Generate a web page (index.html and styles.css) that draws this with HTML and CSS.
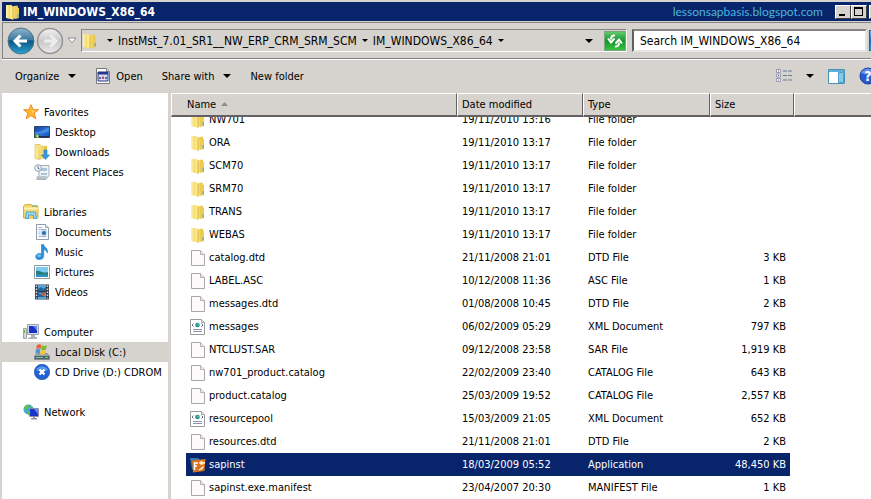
FILE: index.html
```html
<!DOCTYPE html>
<html lang="en">
<head>
    <meta charset="UTF-8">
    <meta name="viewport" content="width=device-width, initial-scale=1.0">
    <title>IM_WINDOWS_X86_64</title>
    <link rel="stylesheet" href="styles.css">
</head>
<body>
    <!-- Shared icons -->
    <svg class="icon-defs" width="0" height="0" aria-hidden="true">
        <defs>
            <linearGradient id="gold" x1="0" x2="1"><stop offset="0" stop-color="#fbe98a"/><stop offset="1" stop-color="#e6bd3c"/></linearGradient>
            <linearGradient id="gold-light" x1="0" x2="1"><stop offset="0" stop-color="#fff3ae"/><stop offset="1" stop-color="#eccb55"/></linearGradient>
            <linearGradient id="screen" x1="0" y1="0" x2="1" y2="1"><stop offset="0" stop-color="#1a3f96"/><stop offset="0.6" stop-color="#2b74d8"/><stop offset="1" stop-color="#154aa8"/></linearGradient>
            <linearGradient id="back" x1="0" y1="0" x2="0" y2="1"><stop offset="0" stop-color="#8fb4cc"/><stop offset="0.45" stop-color="#3b7ba4"/><stop offset="0.5" stop-color="#0d5583"/><stop offset="1" stop-color="#27a5d4"/></linearGradient>
            <linearGradient id="forward" x1="0" y1="0" x2="0" y2="1"><stop offset="0" stop-color="#f2f2f2"/><stop offset="0.5" stop-color="#c9c9c9"/><stop offset="1" stop-color="#e9e9e9"/></linearGradient>
        </defs>
        <symbol id="folder" viewBox="0 0 16 16">
            <path d="M1 1h5l1 1v12l-2 1-4-1z" fill="url(#gold-light)"/>
            <path d="M7 2.500l5-1 1 1v11l-5 1.500H7z" fill="url(#gold)"/>
            <path d="M5 .5l3 2V16l-3-1.500z" fill="#fbe985"/>
            <path d="M8 2.500V16" stroke="#d1a52f" stroke-width=".7"/>
            <path d="M10 3.500l4 .5v10l-4 1z" fill="#eecb52"/>
            <path d="M12.500 10h1.500v3.500h-1.500z" fill="#6bb3bd"/>
        </symbol>
        <symbol id="file" viewBox="0 0 16 16">
            <path d="M1.500.5h9l4 4v11h-13z" fill="#fcfafb" stroke="#aaa5a8"/>
            <path d="M10.500.5v4h4" fill="#eeebed" stroke="#b5b0b3"/>
        </symbol>
        <symbol id="xml" viewBox="0 0 16 16">
            <path d="M.5.5h11l3 3v12H.5z" fill="#fff" stroke="#9b9b9b"/>
            <path d="M11.500.5v3h3" fill="#e4e4e4" stroke="#aaa"/>
            <path d="M3.500 4.500L2 6l1.500 1.500M11.500 4.500L13 6l-1.500 1.500" fill="none" stroke="#667086"/>
            <circle cx="7.500" cy="6" r="2.300" fill="#27967e"/><circle cx="8" cy="5.500" r="1" fill="#58b9df"/>
            <path d="M3 10.500h9M3 12.500h9" stroke="#8894b2"/>
        </symbol>
        <symbol id="app" viewBox="0 0 16 16">
            <path d="M0 1h8l2 2v9H2z" fill="#3b78ae"/>
            <path d="M2 3.500L15.500 2 14.500 14 3 15.500z" fill="#d9741a"/>
            <path d="M4.500 13V6H8M4.500 9H7" fill="none" stroke="#fff" stroke-width="1.500"/>
            <path d="M9 6l3-2v1.300h2.500v1.500H12V8zM13.500 9c-.5 3-2.500 4-5 4" fill="#fff" stroke="#ffe0b8" stroke-width=".8"/>
        </symbol>
        <symbol id="star" viewBox="0 0 16 16">
            <path d="M8 .7l2.100 5h5.300l-4.200 3.500 1.600 5.600L8 11.600l-4.800 3.200 1.600-5.600L.6 5.700h5.300z" fill="#ffb52e" stroke="#ef8b24"/>
            <path d="M8 2.800l1.400 4h3.200L9.500 9z" fill="#ffdf70"/>
        </symbol>
        <symbol id="desktop" viewBox="0 0 16 16">
            <path d="M.5 2.500h15v11H.5z" fill="url(#screen)" stroke="#274577"/>
            <path d="M1 8c5 0 8-2 14-5v4c-5 2-8 3-14 3z" fill="#4e99ed" opacity=".7"/>
            <path d="M1 12h14v1.500H1z" fill="#1c3056"/><circle cx="3" cy="12" r="1.800" fill="#80bc42"/><path d="M3 10.300v3.400h1.800z" fill="#f6d74b"/>
        </symbol>
        <symbol id="downloads" viewBox="0 0 16 16">
            <path d="M1 .5h5l1 1v13l-2 1-4-1z" fill="url(#gold-light)" stroke="#d8b956" stroke-width=".7"/>
            <path d="M5 1.500l8 .5v12l-6 1z" fill="url(#gold)"/>
            <path d="M10 6h3v5h2.500l-4 4.500-4-4.500H10z" fill="#389ae5" stroke="#2276c0" stroke-width=".6"/>
        </symbol>
        <symbol id="recent" viewBox="0 0 16 16">
            <path d="M5 1.500h10v10l-3 4H3l2-4z" fill="#edf2f5" stroke="#a3afb8"/>
            <path d="M7 4h6v3H7zM7 9h6v2H7z" fill="#a9c4d6"/><path d="M3 12h10l-1 3H2z" fill="#b8c4cc"/>
            <circle cx="4" cy="4" r="3.300" fill="#f8fcff" stroke="#8ca0b3"/><path d="M4 2v2.300l1.500.7" fill="none" stroke="#45658b"/>
        </symbol>
        <symbol id="libraries" viewBox="0 0 16 16">
            <path d="M.5 2l2-1.500h6L10 2h5v12H.5z" fill="#f2d66e" stroke="#d8ae3d"/>
            <path d="M1 4.500h14" stroke="#fff4b5" stroke-width="2"/><path d="M9 2h5" stroke="#67ae8c"/>
            <path d="M2.500 14.500l1-6.500h9l1 6.500h-3V11h-5v3.500z" fill="#9ed8f3" stroke="#4aa3d0"/>
        </symbol>
        <symbol id="documents" viewBox="0 0 16 16">
            <path d="M2.500.5h9l3 3v12h-12z" fill="#fafcff" stroke="#8f9cab"/>
            <path d="M11.500.5v3h3" fill="#dce6ee" stroke="#a0aab4"/>
            <path d="M4.500 3.500h4M4.500 5.500h8M4.500 8h2M4.500 10h2M4.500 12.500h8" stroke="#a3b5ca"/>
            <path d="M7.500 6.500h5v5h-5z" fill="#8bb9e6"/><circle cx="10" cy="9" r="1.800" fill="#1e69a9"/>
        </symbol>
        <symbol id="music" viewBox="0 0 16 16">
            <path d="M7.500.5h2c.3 2.500 4.500 3 4 8.500-1-2.500-2.300-3.300-3.800-3.500V12c0 4.500-8 4.800-8 .7 0-2.700 3.400-4 5.800-2.700z" fill="#2b91dc" stroke="#1e75bb" stroke-width=".6"/>
            <ellipse cx="5" cy="11.700" rx="2" ry="1.200" fill="#79c3f2"/>
        </symbol>
        <symbol id="pictures" viewBox="0 0 16 16">
            <path d="M.5 1.500h15v13H.5z" fill="#fff" stroke="#8e9aa3"/>
            <path d="M2 3h12v10H2z" fill="#80cbed"/><path d="M2 7c4-1 6 3 12 1v3H2z" fill="#267c7a"/><path d="M2 10.500h12V13H2z" fill="#2a91c4"/>
        </symbol>
        <symbol id="videos" viewBox="0 0 16 16">
            <path d="M1 .5h14v15H1z" fill="#333c48"/>
            <path d="M4 1h8v6H4zM4 8.500h8V15H4z" fill="#57a5d9"/>
            <path d="M4 5l3-2 2 2 3-2v4H4zM4 9l8 4H4z" fill="#27649a"/><path d="M7 9h4v2.500H8z" fill="#c95947"/>
            <path d="M2.500 1.500v13M13.500 1.500v13" stroke="#dbe4eb" stroke-width="1.400" stroke-dasharray="1.500 1.500"/>
        </symbol>
        <symbol id="computer" viewBox="0 0 16 16">
            <path d="M.5 4.500h3v10h-3z" fill="#d4d7d8" stroke="#a1a4a6"/><path d="M1.500 6v3" stroke="#58b954"/>
            <path d="M4.500.5h11v10h-11z" fill="#d7dae0" stroke="#9da3ae"/><path d="M6 2h8v7H6z" fill="#1832c5"/><path d="M10 2h4v5z" fill="#5f87ef"/>
            <path d="M8 11h4v2h2v2H5v-1l3-1z" fill="#adb1b8"/>
        </symbol>
        <symbol id="disk" viewBox="0 0 16 16">
            <path d="M3 9.500h10l2.500 2.500v3.500H.5V12z" fill="#9ca4aa" stroke="#6b757b" stroke-width=".7"/><path d="M1 12h14v3H1z" fill="#4e656e"/><path d="M2 13.500h7" stroke="#77c29f"/><path d="M11 13.500h3" stroke="#52db63"/>
            <path d="M3 1c2-1 3-1 4.500 0L6.500 5C5 4 4 4 2 5z" fill="#e96136"/><path d="M8 1.300c2 1 3 1 5 0L12 5.500c-2 1-3 .8-5-.2z" fill="#80b837"/>
            <path d="M2 5.500c2-1 3-1 4.500 0l-1 4c-2-1-3-1-4.500 0z" fill="#429ad9"/><path d="M7 5.700c2 1 3 1 5 0L11 10c-2 1-3 1-5 0z" fill="#f4c43a"/>
        </symbol>
        <symbol id="cd" viewBox="0 0 16 16">
            <circle cx="8" cy="8" r="7.700" fill="#2262d2" stroke="#1949a1" stroke-width=".6"/><path d="M2 6c2-5 10-5 12 0-4 2-8 2-12 0z" fill="#5794eb"/>
            <path d="M5.500 5.500l5 5M10.500 5.500l-5 5" stroke="#fff" stroke-width="2.200"/>
        </symbol>
        <symbol id="network" viewBox="0 0 16 16">
            <circle cx="5.500" cy="5.500" r="5" fill="#3fa8dc"/><path d="M2 2c3-2 4-1 4 1L3 6 1 5zM5 7l3 1-2 3-2-1zM7 1l3 2-2 1z" fill="#65bf45"/>
            <path d="M6.500 4.500h9v8h-9z" fill="#c8d1df" stroke="#8790a0"/><path d="M7 5h8v7H7z" fill="#1b35cb"/><path d="M11 5h4v5z" fill="#668bed"/><path d="M10 13h2v1h2v1.500H8V14h2z" fill="#8e949f"/>
        </symbol>
        <symbol id="down" viewBox="0 0 8 4"><path d="M0 0h8L4 4z" fill="currentColor"/></symbol>
    </svg>

    <div class="window">
        <header class="title-bar">
            <svg class="icon"><use href="#folder"/></svg>
            <h1 class="title">IM_WINDOWS_X86_64</h1>
            <span class="watermark">lessonsapbasis.blogspot.com</span>
            <div class="window-buttons">
                <button class="window-btn" aria-label="Minimize"><svg width="12" height="10"><path d="M2 7h6v2H2z"/></svg></button>
                <button class="window-btn" aria-label="Maximize"><svg width="12" height="10"><path d="M1 0h9v9H1zM2 2v6h7V2z" fill-rule="evenodd"/></svg></button>
                <button class="window-btn window-close" aria-label="Close"><svg width="12" height="10"><path d="M2 1l7 7M9 1L2 8" stroke="#000" stroke-width="2"/></svg></button>
            </div>
        </header>

        <!-- Address bar -->
        <nav class="nav-bar" aria-label="Address">
            <div class="history">
                <button class="round-btn" aria-label="Back"><svg width="28" height="28" viewBox="0 0 28 28"><circle cx="14" cy="14" r="13" fill="url(#back)" stroke="#567487"/><path d="M20 14H9M13.500 8.500L8 14l5.500 5.500" fill="none" stroke="#fff" stroke-width="3"/></svg></button>
                <button class="round-btn" aria-label="Forward"><svg width="28" height="28" viewBox="0 0 28 28"><circle cx="14" cy="14" r="12.500" fill="url(#forward)" stroke="#949494" stroke-width="1.500"/><path d="M8 14h11M14.500 8.500L20 14l-5.500 5.500" fill="none" stroke="#ededed" stroke-width="3"/></svg></button>
                <button class="history-btn" aria-label="Recent pages"><svg width="10" height="7"><path d="M1 1h8L5 5.500z" fill="#fff" stroke="#8b9298"/></svg></button>
            </div>
            <div class="address">
                <svg class="icon"><use href="#folder"/></svg>
                <button class="crumb-arrow" aria-label="Parent folders"><svg class="arrow-small"><use href="#down"/></svg></button>
                <a class="crumb" href="#">InstMst_7.01_SR1__NW_ERP_CRM_SRM_SCM</a>
                <button class="crumb-arrow" aria-label="Subfolders"><svg class="arrow-small"><use href="#down"/></svg></button>
                <a class="crumb" href="#">IM_WINDOWS_X86_64</a>
                <button class="crumb-arrow" aria-label="Subfolders"><svg class="arrow-small"><use href="#down"/></svg></button>
                <button class="address-drop" aria-label="Previous locations"><svg class="arrow"><use href="#down"/></svg></button>
                <button class="refresh" aria-label="Refresh"><svg width="18" height="16" viewBox="0 0 18 16"><path d="M9 2.500C6.500 2 5 3.500 5 6.500M2 5.500L5 9.500l3.500-4M9 13.500c2.500.5 4-1 4-4M9.500 10.500l3.500-4 3 4" fill="none" stroke="#fff" stroke-width="2"/></svg></button>
            </div>
            <input class="search" type="text" aria-label="Search" value="Search IM_WINDOWS_X86_64">
            <button class="search-btn" aria-label="Go"></button>
        </nav>

        <div class="toolbar">
            <button class="tool">Organize <svg class="arrow"><use href="#down"/></svg></button>
            <button class="tool">
                <svg width="16" height="16" viewBox="0 0 16 16"><path d="M1.500.5h10l3 3v12h-13z" fill="#fff" stroke="#777"/><path d="M11.500.5v3h3" fill="#ddd" stroke="#888"/><path d="M3 4h10v9H3z" fill="#d8dcf0" stroke="#27358d"/><path d="M3 4h10v2.500H3z" fill="#27358d"/><path d="M4 9h2v2H4zM10 9h2v2h-2z" fill="#3d64cf"/><path d="M7 8.500h2V11H7z" fill="#d84b36"/></svg>
                Open
            </button>
            <button class="tool">Share with <svg class="arrow"><use href="#down"/></svg></button>
            <button class="tool">New folder</button>
            <div class="view-tools">
                <button class="tool" aria-label="Change view"><svg width="16" height="14" viewBox="0 0 16 14"><path d="M.5.5h4v3h-4zM.5 5h4v3h-4zM.5 9.500h4v3h-4z" fill="#f4f7fb" stroke="#8ba1bc"/><path d="M2 2h1M2 6.500h1M2 11h1" stroke="#c34d45"/><path d="M7 2h4M12 2h4M7 6.500h4M12 6.500h4M7 11h4M12 11h4" stroke="#657a91"/></svg></button>
                <button class="tool" aria-label="More views"><svg class="arrow"><use href="#down"/></svg></button>
                <button class="tool" aria-label="Preview pane"><svg width="17" height="15" viewBox="0 0 17 15"><path d="M.5.5h16v14H.5z" fill="#fff" stroke="#4b91b9"/><path d="M1 1h15v2H1z" fill="#5db2d9"/><path d="M10.500 3.500h5v10h-5z" fill="#83cbea" stroke="#4e9dc4"/></svg></button>
                <button class="tool" aria-label="Help"><svg width="18" height="18" viewBox="0 0 18 18"><circle cx="9" cy="9" r="8" fill="#2a5ad0" stroke="#173d9d"/><path d="M2 6c3-6 11-6 14 0-4 2-9 2-14 0z" fill="#658de6"/><text class="help-mark" x="9" y="14" text-anchor="middle">?</text></svg></button>
            </div>
        </div>

        <div class="content">
            <aside class="sidebar">
                <ul class="tree">
                    <li><a class="tree-root" href="#"><svg class="icon"><use href="#star"/></svg>Favorites</a></li>
                    <li><a class="tree-item" href="#"><svg class="icon"><use href="#desktop"/></svg>Desktop</a></li>
                    <li><a class="tree-item" href="#"><svg class="icon"><use href="#downloads"/></svg>Downloads</a></li>
                    <li><a class="tree-item" href="#"><svg class="icon"><use href="#recent"/></svg>Recent Places</a></li>
                </ul>
                <ul class="tree">
                    <li><a class="tree-root" href="#"><svg class="icon"><use href="#libraries"/></svg>Libraries</a></li>
                    <li><a class="tree-item" href="#"><svg class="icon"><use href="#documents"/></svg>Documents</a></li>
                    <li><a class="tree-item" href="#"><svg class="icon"><use href="#music"/></svg>Music</a></li>
                    <li><a class="tree-item" href="#"><svg class="icon"><use href="#pictures"/></svg>Pictures</a></li>
                    <li><a class="tree-item" href="#"><svg class="icon"><use href="#videos"/></svg>Videos</a></li>
                </ul>
                <ul class="tree">
                    <li><a class="tree-root" href="#"><svg class="icon"><use href="#computer"/></svg>Computer</a></li>
                    <li><a class="tree-item current" href="#"><svg class="icon"><use href="#disk"/></svg>Local Disk (C:)</a></li>
                    <li><a class="tree-item" href="#"><svg class="icon"><use href="#cd"/></svg>CD Drive (D:) CDROM</a></li>
                </ul>
                <ul class="tree">
                    <li><a class="tree-root" href="#"><svg class="icon"><use href="#network"/></svg>Network</a></li>
                </ul>
            </aside>

            <main class="files" id="files">
                <table class="file-table">
                    <colgroup>
                        <col class="col-gutter"><col class="col-name"><col class="col-date"><col class="col-type"><col class="col-size"><col class="col-edge"><col>
                    </colgroup>
                    <thead>
                        <tr>
                            <th class="name-head" colspan="2">Name <svg class="sort" width="7" height="4"><path d="M0 4h7L3.500 0z" fill="#8d8d8d"/></svg></th>
                            <th>Date modified</th>
                            <th>Type</th>
                            <th colspan="2">Size</th>
                            <th class="last-head"></th>
                        </tr>
                    </thead>
                    <tbody>
                        <tr><td></td><td><span class="name"><svg class="icon"><use href="#folder"/></svg>NW701</span></td><td>19/11/2010 13:16</td><td>File folder</td><td></td></tr>
                        <tr><td></td><td><span class="name"><svg class="icon"><use href="#folder"/></svg>ORA</span></td><td>19/11/2010 13:17</td><td>File folder</td><td></td></tr>
                        <tr><td></td><td><span class="name"><svg class="icon"><use href="#folder"/></svg>SCM70</span></td><td>19/11/2010 13:17</td><td>File folder</td><td></td></tr>
                        <tr><td></td><td><span class="name"><svg class="icon"><use href="#folder"/></svg>SRM70</span></td><td>19/11/2010 13:17</td><td>File folder</td><td></td></tr>
                        <tr><td></td><td><span class="name"><svg class="icon"><use href="#folder"/></svg>TRANS</span></td><td>19/11/2010 13:17</td><td>File folder</td><td></td></tr>
                        <tr><td></td><td><span class="name"><svg class="icon"><use href="#folder"/></svg>WEBAS</span></td><td>19/11/2010 13:17</td><td>File folder</td><td></td></tr>
                        <tr><td></td><td><span class="name"><svg class="icon"><use href="#file"/></svg>catalog.dtd</span></td><td>21/11/2008 21:01</td><td>DTD File</td><td class="size">3 KB</td></tr>
                        <tr><td></td><td><span class="name"><svg class="icon"><use href="#file"/></svg>LABEL.ASC</span></td><td>10/12/2008 11:36</td><td>ASC File</td><td class="size">1 KB</td></tr>
                        <tr><td></td><td><span class="name"><svg class="icon"><use href="#file"/></svg>messages.dtd</span></td><td>01/08/2008 10:45</td><td>DTD File</td><td class="size">2 KB</td></tr>
                        <tr><td></td><td><span class="name"><svg class="icon"><use href="#xml"/></svg>messages</span></td><td>06/02/2009 05:29</td><td>XML Document</td><td class="size">797 KB</td></tr>
                        <tr><td></td><td><span class="name"><svg class="icon"><use href="#file"/></svg>NTCLUST.SAR</span></td><td>09/12/2008 23:58</td><td>SAR File</td><td class="size">1,919 KB</td></tr>
                        <tr><td></td><td><span class="name"><svg class="icon"><use href="#file"/></svg>nw701_product.catalog</span></td><td>22/02/2009 23:40</td><td>CATALOG File</td><td class="size">643 KB</td></tr>
                        <tr><td></td><td><span class="name"><svg class="icon"><use href="#file"/></svg>product.catalog</span></td><td>25/03/2009 19:52</td><td>CATALOG File</td><td class="size">2,557 KB</td></tr>
                        <tr><td></td><td><span class="name"><svg class="icon"><use href="#xml"/></svg>resourcepool</span></td><td>15/03/2009 21:05</td><td>XML Document</td><td class="size">652 KB</td></tr>
                        <tr><td></td><td><span class="name"><svg class="icon"><use href="#file"/></svg>resources.dtd</span></td><td>21/11/2008 21:01</td><td>DTD File</td><td class="size">2 KB</td></tr>
                        <tr class="selected"><td></td><td><span class="name"><svg class="icon"><use href="#app"/></svg>sapinst</span></td><td>18/03/2009 05:52</td><td>Application</td><td class="size">48,450 KB</td></tr>
                        <tr><td></td><td><span class="name"><svg class="icon"><use href="#file"/></svg>sapinst.exe.manifest</span></td><td>23/04/2007 20:30</td><td>MANIFEST File</td><td class="size">1 KB</td></tr>
                    </tbody>
                </table>
            </main>
        </div>
    </div>

    <script>
        // The list opens slightly scrolled
        document.getElementById('files').scrollTop = 9;
    </script>
</body>
</html>
```
FILE: styles.css
```css
* {
    box-sizing: border-box;
}

body {
    margin: 0;
    font-family: "DejaVu Sans Condensed", "DejaVu Sans", sans-serif;
    font-size: 11px;
    color: #000;
    background: #d6d3ce;
}

button {
    margin: 0;
    padding: 0;
    border: none;
    background: none;
    font: inherit;
    color: inherit;
}

a {
    color: inherit;
    text-decoration: none;
}

svg {
    display: block;
    flex: none;
}

.icon-defs {
    position: absolute;
}

.icon {
    width: 16px;
    height: 16px;
}

.arrow {
    width: 8px;
    height: 4px;
}

.arrow-small {
    width: 6px;
    height: 3px;
}

.window {
    display: flex;
    flex-direction: column;
    height: 100vh;
    padding: 2px 0 0 2px;
    overflow: hidden;
}

/* Title bar */
.title-bar {
    display: flex;
    align-items: center;
    height: 19px;
    margin-right: -16px;
    padding: 0 2px 0 3px;
    gap: 2px;
    flex: none;
    background: #08246b;
    color: #fff;
}

.title {
    margin: 0;
    flex: 1;
    font-size: 12px;
    font-weight: bold;
}

.watermark {
    margin-right: 10px;
    font-family: Lato, sans-serif;
    font-size: 12px;
    color: #4cb4dc;
}

.window-buttons {
    display: flex;
}

.window-btn {
    width: 16px;
    height: 14px;
    padding: 1px;
    background: #d6d3ce;
    border: 1px solid;
    border-color: #fff #404040 #404040 #fff;
}

.window-close {
    margin-left: 2px;
}

/* Address bar */
.nav-bar {
    display: flex;
    align-items: center;
    height: 37px;
    margin: 1px -16px 0 0;
    flex: none;
    border-top: 1px solid #848284;
    border-bottom: 1px solid #848284;
    border-left: 1px solid #848284;
    box-shadow: 0 1px 0 #fff;
}

.history {
    display: flex;
    align-items: center;
    width: 78px;
    padding-left: 4px;
    gap: 1px;
}

.history-btn {
    margin-left: 2px;
}

.address {
    display: flex;
    align-items: center;
    flex: 1;
    height: 23px;
    gap: 5px;
    border: 1px solid;
    border-color: #848284 #fff #fff #848284;
    font-size: 12px;
}

.crumb-arrow {
    padding: 4px 0;
}

.address .icon {
    margin-right: 4px;
}

.address-drop {
    margin-left: auto;
    padding: 6px;
}

.refresh {
    width: 22px;
    height: 20px;
    padding: 1px;
    background: linear-gradient(#62c96a, #16932a 50%, #35c243);
    border: 1px solid #7ca77e;
}

.search {
    width: 235px;
    height: 23px;
    margin: 0 2px 0 5px;
    padding: 0 6px;
    font: inherit;
    font-size: 12px;
    color: #000;
    background: #fff;
    border: 2px solid;
    border-color: #848284 #e7e5e2 #e7e5e2 #606060;
    border-radius: 0;
}

.search-btn {
    width: 18px;
    height: 21px;
    background: linear-gradient(#76b4ed, #1766c6 50%, #31a7ed);
    border: 1px solid #315e95;
}

/* Command bar */
.toolbar {
    display: flex;
    align-items: center;
    height: 34px;
    margin-right: -6px;
    padding-left: 13px;
    flex: none;
}

.tool {
    display: flex;
    align-items: center;
    gap: 5px;
    height: 24px;
    margin-right: 19px;
}

.tool .arrow {
    margin-left: 4px;
}

.view-tools {
    display: flex;
    margin-left: auto;
}

.view-tools .tool {
    margin-right: 14px;
}

.view-tools .tool:first-child {
    margin-right: 10px;
}

.view-tools .tool:last-child {
    margin-right: 0;
}

.help-mark {
    font-size: 14px;
    font-weight: bold;
    fill: #fff;
}

.content {
    display: flex;
    flex: 1;
    min-height: 0;
}

/* Folder tree */
.sidebar {
    width: 166px;
    margin-right: 3px;
    padding-top: 9px;
    flex: none;
    background: #fff;
    overflow: hidden;
}

.tree {
    margin: 0 0 20px;
    padding: 0;
    list-style: none;
}

.tree-root,
.tree-item {
    display: flex;
    align-items: center;
    gap: 5px;
    height: 20px;
    padding-left: 21px;
    white-space: nowrap;
}

.tree-item {
    padding-left: 32px;
}

.tree-item.current {
    background: #d6d3ce;
}

/* File list */
.files {
    flex: 1;
    min-width: 0;
    padding-bottom: 20px;
    background: #fff;
    overflow: hidden;
}

.file-table {
    width: 100%;
    table-layout: fixed;
    border-collapse: separate;
    border-spacing: 0;
}

.col-gutter {
    width: 15px;
}

.col-name {
    width: 271px;
}

.col-date {
    width: 126px;
}

.col-type {
    width: 127px;
}

.col-size {
    width: 80px;
}

.col-edge {
    width: 4px;
}

.file-table th {
    position: sticky;
    top: 0;
    z-index: 1;
    height: 24px;
    padding: 0 4px;
    font-weight: normal;
    text-align: left;
    background: #d6d3ce;
    border: 1px solid;
    border-color: #fff #636163 #636163 #fff;
    border-bottom-width: 2px;
}

.file-table .name-head {
    padding-left: 15px;
}

.file-table .last-head {
    border-right: none;
}

.sort {
    display: inline-block;
    margin-left: 2px;
    vertical-align: 2px;
}

.file-table td {
    height: 23px;
    padding: 0 5px;
    white-space: nowrap;
}

.file-table td:nth-child(2) {
    padding-left: 4px;
}

.name {
    display: flex;
    align-items: center;
    gap: 3px;
}

.file-table .size {
    padding-right: 4px;
    text-align: right;
}

.selected td:nth-child(n+2) {
    background: #08246b;
    color: #fff;
}
```
